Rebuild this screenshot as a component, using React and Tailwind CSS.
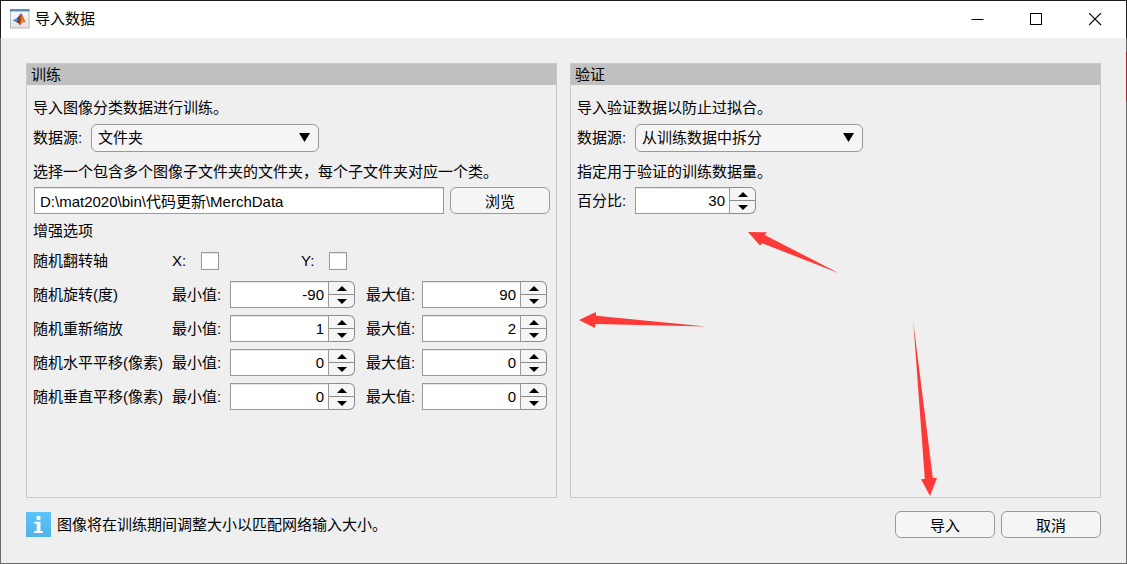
import { useState } from 'react';

function MatlabLogo() {
  return (
    <svg viewBox="0 0 20 20" className="h-5 w-5 shrink-0" aria-hidden="true">
      <defs>
        <linearGradient id="flame" x1="0" y1="0" x2="1" y2="0">
          <stop offset="0" stopColor="#3c1a2a" />
          <stop offset="0.4" stopColor="#b83a14" />
          <stop offset="0.7" stopColor="#ea6a1e" />
          <stop offset="1" stopColor="#c8401a" />
        </linearGradient>
        <linearGradient id="sheet" x1="0" y1="0" x2="0" y2="1">
          <stop offset="0" stopColor="#ffffff" />
          <stop offset="1" stopColor="#dfe3e8" />
        </linearGradient>
      </defs>
      <rect x="0.5" y="0.5" width="18.5" height="18.5" fill="url(#sheet)" stroke="#b4b8bc" />
      <rect x="0" y="0" width="19.5" height="2.5" fill="#5d8fb8" />
      <path d="M2.5 11.2 L6.4 9.4 L8.5 11.6 L6.2 13.2 Z" fill="#4f8fc0" />
      <path d="M6.4 9.4 C8.4 8.8 9.2 5.2 11.2 4.2 L9.6 10 L8.5 11.6 Z" fill="#28548c" />
      <path d="M6.2 13.2 C8.6 11.6 9.6 8 11.2 4.2 C13 5.4 14 10.6 16 13.6 C13.6 12 12 13.6 9.8 16.4 C9.2 14.6 8 13.2 6.2 13.2 Z" fill="url(#flame)" />
      <path d="M11.2 4.2 C12 7 11.6 12 9.8 16.4 C12 13.4 12.8 12.6 13.4 12.6 C12.9 9 12.3 6 11.2 4.2 Z" fill="#f08c2e" />
    </svg>
  );
}

function TitleBar() {
  const control = 'flex h-full w-[59px] items-center justify-center hover:bg-gray-200';
  return (
    <header className="flex h-[38px] shrink-0 items-center border-x border-t border-[#1f1c1f] bg-white pr-px">
      <div className="flex flex-1 items-center gap-[5px] pb-px pl-[9px]">
        <MatlabLogo />
        <h1>导入数据</h1>
      </div>
      <button type="button" aria-label="最小化" className={control}>
        <svg width="13" height="13" viewBox="0 0 13 13" aria-hidden="true">
          <path d="M0.5 6.5H12.5" stroke="#000" />
        </svg>
      </button>
      <button type="button" aria-label="最大化" className={control}>
        <svg width="13" height="13" viewBox="0 0 13 13" aria-hidden="true">
          <rect x="0.5" y="0.5" width="11" height="11" fill="none" stroke="#000" />
        </svg>
      </button>
      <button type="button" aria-label="关闭" className={control}>
        <svg width="13" height="13" viewBox="0 0 13 13" aria-hidden="true">
          <path d="M0 0L12 12M12 0L0 12" stroke="#000" strokeWidth="1.1" />
        </svg>
      </button>
    </header>
  );
}

function Panel({ title, children }) {
  return (
    <section className="border border-[#c8c8c8]">
      <h2 className="h-[21px] bg-[#c0c0c0] pl-1 leading-[21px]">{title}</h2>
      <div className="px-[6px] pt-[13px] pb-4">{children}</div>
    </section>
  );
}

function SourceRow({ id, options }) {
  return (
    <div className="mt-[6px] flex items-center">
      <label htmlFor={id} className="w-[58px] shrink-0">数据源:</label>
      <div className="relative w-[228px]">
        <select id={id} className="h-7 w-full appearance-none rounded-[6px] border border-[#999] bg-[#f5f5f5] pl-[6px] pr-8">
          {options.map((o) => (
            <option key={o}>{o}</option>
          ))}
        </select>
        <svg width="11" height="9" viewBox="0 0 11 9" className="pointer-events-none absolute top-[9px] right-[9px]" aria-hidden="true">
          <path d="M0 0H11L5.5 9Z" fill="#000" />
        </svg>
      </div>
    </div>
  );
}

function Spinner({ id, initial, label, width = 'w-[125px]' }) {
  const [value, setValue] = useState(initial);
  return (
    <div className={`flex h-[27px] ${width}`}>
      <input
        id={id}
        type="number"
        aria-label={label}
        value={value}
        onChange={(e) => setValue(Number(e.target.value))}
        className="min-w-0 flex-1 appearance-none border border-[#999] bg-white pr-1 text-right shadow-[inset_0_1px_0_#e6e6e6] [appearance:textfield] [&::-webkit-inner-spin-button]:appearance-none"
      />
      <div className="flex w-[26px] flex-col overflow-hidden rounded-r-[6px] border border-l-0 border-[#8c8c8c] bg-[#f5f5f5]">
        <button type="button" aria-label="增加" onClick={() => setValue(value + 1)} className="flex h-[13px] items-center justify-center border-b border-[#8c8c8c]">
          <svg width="10" height="5" viewBox="0 0 10 5" aria-hidden="true">
            <path d="M0 5H10L5 0Z" fill="#000" />
          </svg>
        </button>
        <button type="button" aria-label="减少" onClick={() => setValue(value - 1)} className="flex flex-1 items-center justify-center">
          <svg width="10" height="5" viewBox="0 0 10 5" aria-hidden="true">
            <path d="M0 0H10L5 5Z" fill="#000" />
          </svg>
        </button>
      </div>
    </div>
  );
}

function Check({ id }) {
  return (
    <input
      id={id}
      type="checkbox"
      className="size-[18px] appearance-none border border-[#999] bg-white shadow-[inset_0_1px_0_#e6e6e6] checked:bg-sky-500"
    />
  );
}

const RANGES = [
  { id: 'rotation', name: '随机旋转(度)', min: -90, max: 90 },
  { id: 'scale', name: '随机重新缩放', min: 1, max: 2 },
  { id: 'shift-x', name: '随机水平平移(像素)', min: 0, max: 0 },
  { id: 'shift-y', name: '随机垂直平移(像素)', min: 0, max: 0 },
];

function DialogButton({ children }) {
  return (
    <button type="button" className="h-[27px] w-[100px] shrink-0 rounded-[6px] border border-[#999] bg-[#f5f5f5] pt-[3px] leading-5 hover:bg-white">
      {children}
    </button>
  );
}

function TrainingPanel() {
  return (
    <Panel title="训练">
      <p>导入图像分类数据进行训练。</p>
      <SourceRow id="train-source" options={['文件夹', '工作区中的数据存储']} />
      <p className="mt-[10px]">选择一个包含多个图像子文件夹的文件夹，每个子文件夹对应一个类。</p>
      <div className="mt-[5px] flex gap-[6px] pl-px">
        <input
          type="text"
          aria-label="文件夹路径"
          defaultValue="D:\mat2020\bin\代码更新\MerchData"
          className="h-[27px] min-w-0 flex-1 border border-[#999] bg-white px-[5px] shadow-[inset_0_1px_0_#e6e6e6]"
        />
        <DialogButton>浏览</DialogButton>
      </div>
      <h3 className="mt-[7px]">增强选项</h3>
      <div className="mt-[10px] flex items-center">
        <span className="w-[139px]">随机翻转轴</span>
        <div className="flex w-[129px] items-center">
          <label htmlFor="flip-x" className="w-[29px]">X:</label>
          <Check id="flip-x" />
        </div>
        <div className="flex items-center">
          <label htmlFor="flip-y" className="w-7">Y:</label>
          <Check id="flip-y" />
        </div>
      </div>
      <div className="mt-[10px] flex flex-col gap-[7px]">
        {RANGES.map((r) => (
          <div key={r.id} className="flex items-center whitespace-nowrap">
            <span className="w-[139px]">{r.name}</span>
            <label htmlFor={`${r.id}-min`} className="w-[58px]">最小值:</label>
            <Spinner id={`${r.id}-min`} initial={r.min} />
            <label htmlFor={`${r.id}-max`} className="ml-[11px] w-14">最大值:</label>
            <Spinner id={`${r.id}-max`} initial={r.max} />
          </div>
        ))}
      </div>
    </Panel>
  );
}

function ValidationPanel() {
  return (
    <Panel title="验证">
      <p>导入验证数据以防止过拟合。</p>
      <SourceRow id="validation-source" options={['从训练数据中拆分', '文件夹', '无']} />
      <p className="mt-[10px]">指定用于验证的训练数据量。</p>
      <div className="mt-[5px] flex items-center">
        <label htmlFor="percent" className="w-[58px]">百分比:</label>
        <Spinner id="percent" initial={30} width="w-[121px]" />
      </div>
    </Panel>
  );
}

function Arrows() {
  return (
    <svg width="1127" height="564" viewBox="0 0 1127 564" className="pointer-events-none absolute top-0 left-0" aria-hidden="true">
      <g fill="#fd3a38">
        <path d="M748 232L767 232.2L764.7 235L839 273.2L762.2 243.3L760 245.6Z" />
        <path d="M579 320L595.8 312L596 315.8L706 326.6L595.4 323.9L595 328Z" />
        <path d="M913.3 322L932.8 477.7L937 478L930 496L921 479.3L924.8 479Z" />
      </g>
    </svg>
  );
}

export default function App() {
  return (
    <div className="relative flex min-h-screen flex-col overflow-hidden bg-[#efefef] font-['Liberation_Sans','Noto_Sans_CJK_SC',sans-serif] text-[15px] leading-5 text-black">
      <TitleBar />
      <main className="flex flex-1 flex-col border-x border-b border-[#6b6b6b] px-[25px] pt-[25px] pb-[25px]">
        <div className="grid flex-1 grid-cols-2 gap-[13px]">
          <TrainingPanel />
          <ValidationPanel />
        </div>
        <footer className="mt-[13px] flex items-center gap-[6px]">
          <svg width="25" height="25" viewBox="0 0 25 25" className="shrink-0" aria-hidden="true">
            <defs>
              <linearGradient id="info" x1="0" y1="0" x2="0" y2="1">
                <stop offset="0" stopColor="#5cc5fb" />
                <stop offset="1" stopColor="#4fb3ea" />
              </linearGradient>
            </defs>
            <rect width="25" height="25" fill="url(#info)" />
            <circle cx="12.5" cy="6" r="2.2" fill="#fff" />
            <path d="M8.3 9.8H14.5V19H17V21H8V19H10.7V11.8H8.3Z" fill="#fff" />
          </svg>
          <p className="flex-1">图像将在训练期间调整大小以匹配网络输入大小。</p>
          <DialogButton>导入</DialogButton>
          <DialogButton>取消</DialogButton>
        </footer>
      </main>
      <Arrows />
      <span className="absolute top-[52px] right-0 h-[49px] w-px bg-[#8c2530]" />
    </div>
  );
}
